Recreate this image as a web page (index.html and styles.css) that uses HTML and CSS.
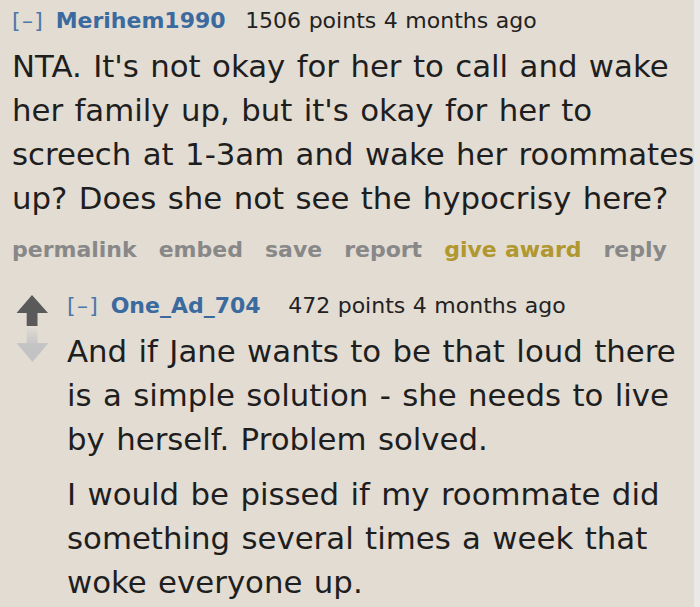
FILE: index.html
```html
<!DOCTYPE html>
<html>
<head>
<meta charset="utf-8">
<link rel="stylesheet" href="styles.css">
</head>
<body>
<div class="comment">
  <div class="entry">
    <p class="tagline"><a class="expand">[–]</a> <a class="author">Merihem1990</a> <span class="score">1506 points</span> <time>4 months ago</time></p>
    <div class="md">
      <p>NTA. It's not okay for her to call and wake her family up, but it's okay for her to screech at 1-3am and wake her roommates up? Does she not see the hypocrisy here?</p>
    </div>
    <ul class="buttons">
      <li>permalink</li>
      <li>embed</li>
      <li>save</li>
      <li>report</li>
      <li class="gold">give award</li>
      <li>reply</li>
    </ul>
  </div>
  <div class="child">
    <div class="midcol">
      <svg class="arrows" width="34" height="74" viewBox="0 0 34 74">
        <defs>
          <linearGradient id="dn" x1="0" y1="37" x2="0" y2="55" gradientUnits="userSpaceOnUse">
            <stop offset="0" stop-color="#dedad4"/>
            <stop offset="1" stop-color="#c3c3c3"/>
          </linearGradient>
        </defs>
        <polygon points="16,4 32,22 21.5,22 21.5,35 10.7,35 10.7,22 0.5,22" fill="#5a5a5a"/>
        <polygon points="10.7,37 21.5,37 21.5,52 32.5,52 16.5,71 0.5,52 10.7,52" fill="url(#dn)"/>
      </svg>
    </div>
    <div class="entry">
      <p class="tagline"><a class="expand">[–]</a> <a class="author author-child">One_Ad_704</a> <span class="score">472 points</span> <time>4 months ago</time></p>
      <div class="md">
        <p>And if Jane wants to be that loud there is a simple solution - she needs to live by herself. Problem solved.</p>
        <p>I would be pissed if my roommate did something several times a week that woke everyone up.</p>
      </div>
    </div>
  </div>
</div>
</body>
</html>
```

FILE: styles.css
```css
html, body {
  margin: 0;
  padding: 0;
}
body {
  width: 700px;
  height: 607px;
  overflow: hidden;
  background: linear-gradient(to right, #e2dcd3 0, #e2dcd3 694px, #ebe9e5 694px);
  font-family: Verdana, "DejaVu Sans", sans-serif;
  color: #222222;
  word-spacing: 0.034em;
}
.comment {
  padding: 8px 0 0 12px;
}
.tagline {
  margin: 0;
  font-size: 22px;
  line-height: 26px;
  height: 26px;
  white-space: nowrap;
  color: #222222;
}
.expand {
  color: #4a78a8;
  letter-spacing: 1.3px;
  margin-right: 4px;
}
.author {
  color: #3a6a9e;
  font-weight: bold;
  margin-right: 12px;
}
.author-child {
  margin-right: 20px;
}
.md {
  margin-top: 10px;
  font-size: 30.8px;
  line-height: 44px;
  color: #1e1e1e;
  word-spacing: 1.6px;
}
.md p {
  margin: 0 0 11px;
}
.buttons {
  list-style: none;
  margin: 17px 0 0;
  padding: 0;
  display: flex;
  gap: 22px;
  font-size: 22px;
  line-height: 26px;
  font-weight: bold;
  color: #888888;
}
.buttons .gold {
  color: #b0972f;
}
.child {
  display: flex;
  margin-top: 30px;
}
.midcol {
  width: 55px;
  flex: none;
  padding-left: 4px;
  box-sizing: border-box;
}
.arrows {
  display: block;
  margin-top: -2px;
}
.child .entry {
  flex: 1;
  min-width: 0;
}
```
